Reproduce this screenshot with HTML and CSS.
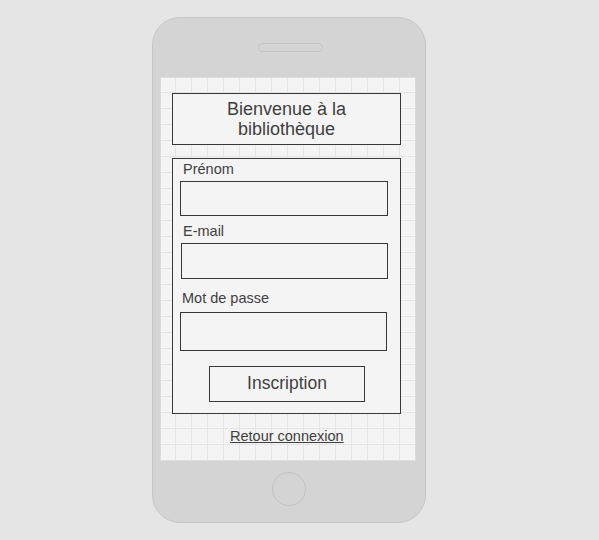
FILE: index.html
```html
<!DOCTYPE html>
<html lang="fr">
<head>
<meta charset="utf-8">
<title>Inscription</title>
<link rel="stylesheet" href="styles.css">
</head>
<body>
<div class="phone">
  <div class="speaker"></div>
  <div class="screen">
    <h1 class="title">Bienvenue à la bibliothèque</h1>
    <form class="form">
      <label class="label label-first">Prénom</label>
      <div class="input input-first"></div>
      <label class="label label-second">E-mail</label>
      <div class="input input-second"></div>
      <label class="label label-third">Mot de passe</label>
      <div class="input input-third"></div>
      <div class="button">Inscription</div>
    </form>
    <a class="back" href="#">Retour connexion</a>
  </div>
  <div class="home"></div>
</div>
</body>
</html>
```
FILE: styles.css
```css
html, body {
  margin: 0;
  padding: 0;
}
body {
  background: #e5e5e5;
  font-family: "Liberation Sans", Arial, sans-serif;
  color: #3f3f3f;
  width: 599px;
  height: 540px;
  overflow: hidden;
}
.phone {
  box-sizing: border-box;
  margin: 17px 0 0 152px;
  width: 274px;
  height: 506px;
  background: #d4d4d4;
  border: 1px solid #c6c6c6;
  border-radius: 28px;
  display: flex;
  flex-direction: column;
  align-items: flex-start;
}
.speaker {
  box-sizing: border-box;
  margin: 25px 0 0 105px;
  width: 65px;
  height: 9px;
  border: 1px solid #c4c4c4;
  border-radius: 5px;
  background: #d4d4d4;
}
.screen {
  box-sizing: border-box;
  margin: 25px 0 0 7px;
  width: 256px;
  height: 384px;
  border: 1px solid #dcdcdc;
  background-color: #f4f4f4;
  background-image:
    linear-gradient(to right, #e4e4e4 1px, transparent 1px),
    linear-gradient(to bottom, #e4e4e4 1px, transparent 1px);
  background-size: 16px 16px;
  background-position: 14px 14px;
  display: flex;
  flex-direction: column;
  align-items: flex-start;
}
.title {
  box-sizing: border-box;
  margin: 15px 0 0 11px;
  width: 229px;
  height: 52px;
  padding: 5px 4px;
  border: 1px solid #383838;
  background: #f4f4f4;
  font-size: 18px;
  font-weight: normal;
  line-height: 20px;
  text-align: center;
}
.form {
  box-sizing: border-box;
  margin: 13px 0 0 11px;
  width: 229px;
  height: 256px;
  border: 1px solid #383838;
  background: #f4f4f4;
  padding: 2px 0 0 0;
  display: flex;
  flex-direction: column;
  align-items: flex-start;
}
.label {
  display: block;
  font-size: 14.5px;
  line-height: 16px;
  margin-left: 10px;
}
.label-second { margin-top: 7px; }
.label-third { margin-top: 11px; margin-left: 9px; }
.input {
  box-sizing: border-box;
  border: 1px solid #383838;
  background: #f4f4f4;
  margin-top: 4px;
}
.input-first { margin-left: 7px; width: 208px; height: 35px; }
.input-second { margin-left: 8px; width: 207px; height: 36px; }
.input-third { margin-top: 6px; margin-left: 7px; width: 207px; height: 39px; }
.button {
  box-sizing: border-box;
  margin: 15px 0 0 36px;
  width: 156px;
  height: 36px;
  border: 1px solid #383838;
  background: #f4f4f4;
  font-size: 17.5px;
  line-height: 33px;
  text-align: center;
}
.back {
  margin: 14px 0 0 69px;
  font-size: 14.5px;
  line-height: 16px;
  color: #3f3f3f;
  text-decoration: underline;
}
.home {
  box-sizing: border-box;
  margin: 11px 0 0 119px;
  width: 34px;
  height: 34px;
  border: 1px solid #c2c2c2;
  border-radius: 50%;
}
```
